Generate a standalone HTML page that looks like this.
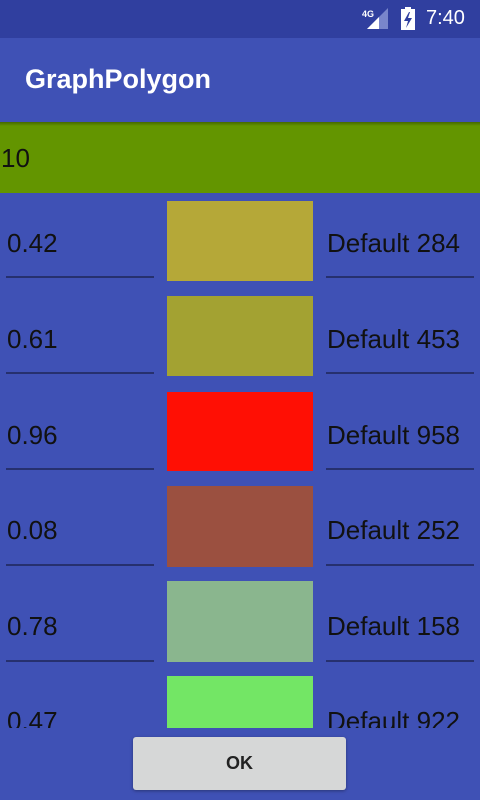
<!DOCTYPE html>
<html><head><style>
body{margin:0;width:480px;height:800px;background:#3f51b5;position:relative;overflow:hidden;font-family:"Liberation Sans",sans-serif}
.a{position:absolute}
.t{position:absolute;font-size:26px;color:#111;line-height:30px}
.u{position:absolute;height:2px;background:#26306e;width:148px}
.s{position:absolute;left:167px;width:146px}
</style></head><body>
<div class="a" style="left:0;top:0;width:480px;height:38px;background:#303f9f"></div>
<svg class="a" style="left:362px;top:8px" width="28" height="22"><text x="0" y="9" font-size="9" fill="#fff" font-family="Liberation Sans" font-weight="bold">4G</text><polygon points="5,21 26,21 26,0" fill="#7986cb"/><polygon points="5,21 17,21 17,9" fill="#fff"/></svg>
<svg class="a" style="left:400px;top:7px" width="16" height="23"><rect x="1" y="2" width="14" height="21" fill="#fff"/><rect x="5" y="0" width="6" height="3" fill="#fff"/><polygon points="9,5 4,14 8,14 6,21 12,11 8,11 10,5" fill="#303f9f"/></svg>
<div class="a" style="left:426px;top:7px;font-size:20px;color:#fff">7:40</div>
<div class="a" style="left:0;top:38px;width:480px;height:84px;background:#3f51b5"></div>
<div class="a" style="left:25px;top:64px;font-size:27px;color:#fff;font-weight:bold">GraphPolygon</div>
<div class="a" style="left:0;top:122px;width:480px;height:71px;background:#639500"></div>
<div class="a" style="left:0;top:122px;width:480px;height:4px;background:linear-gradient(rgba(0,0,0,.3),rgba(0,0,0,0))"></div>
<div class="t" style="left:1px;top:143px">10</div>

<div class="s" style="top:201px;height:80px;background:#b5a838"></div>
<div class="t" style="left:7px;top:228px">0.42</div><div class="t" style="left:327px;top:228px">Default 284</div>
<div class="u" style="left:6px;top:276px"></div><div class="u" style="left:326px;top:276px"></div>

<div class="s" style="top:296px;height:80px;background:#a3a232"></div>
<div class="t" style="left:7px;top:324px">0.61</div><div class="t" style="left:327px;top:324px">Default 453</div>
<div class="u" style="left:6px;top:372px"></div><div class="u" style="left:326px;top:372px"></div>

<div class="s" style="top:392px;height:79px;background:#ff0f04"></div>
<div class="t" style="left:7px;top:420px">0.96</div><div class="t" style="left:327px;top:420px">Default 958</div>
<div class="u" style="left:6px;top:468px"></div><div class="u" style="left:326px;top:468px"></div>

<div class="s" style="top:486px;height:81px;background:#9b5040"></div>
<div class="t" style="left:7px;top:515px">0.08</div><div class="t" style="left:327px;top:515px">Default 252</div>
<div class="u" style="left:6px;top:564px"></div><div class="u" style="left:326px;top:564px"></div>

<div class="s" style="top:581px;height:81px;background:#8ab68e"></div>
<div class="t" style="left:7px;top:611px">0.78</div><div class="t" style="left:327px;top:611px">Default 158</div>
<div class="u" style="left:6px;top:660px"></div><div class="u" style="left:326px;top:660px"></div>

<div class="a" style="left:0;top:676px;width:480px;height:52px;overflow:hidden">
<div class="s" style="top:0;height:52px;background:#73e665"></div>
<div class="t" style="left:7px;top:30px">0.47</div><div class="t" style="left:327px;top:30px">Default 922</div>
</div>
<div class="a" style="left:133px;top:737px;width:213px;height:53px;background:#d6d7d7;border-radius:3px;box-shadow:0 1px 3px rgba(0,0,0,.35);text-align:center;line-height:53px;font-size:18px;font-weight:bold;color:#222">OK</div>
</body></html>
